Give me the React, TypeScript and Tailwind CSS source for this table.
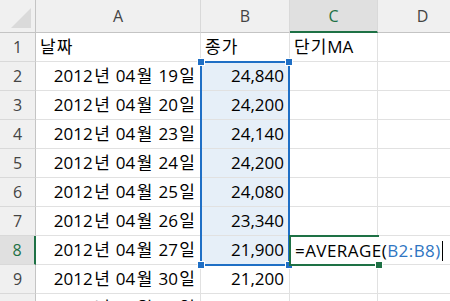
import React from 'react';

const FONT = "font-['Open_Sans','Noto_Sans_CJK_KR',sans-serif]";

const rows: { a: string; b: string }[] = [
  { a: '2012년 04월 19일', b: '24,840' },
  { a: '2012년 04월 20일', b: '24,200' },
  { a: '2012년 04월 23일', b: '24,140' },
  { a: '2012년 04월 24일', b: '24,200' },
  { a: '2012년 04월 25일', b: '24,080' },
  { a: '2012년 04월 26일', b: '23,340' },
  { a: '2012년 04월 27일', b: '21,900' },
  { a: '2012년 04월 30일', b: '21,200' },
  { a: '2012년 05월 01일', b: '21,150' },
];

// Hangul glyphs are a bit wider in the original font, pad them out
function Ko({ text, pad = 'px-[1.5px]' }: { text: string; pad?: string }) {
  return (
    <span>
      {Array.from(text).map((ch, i) =>
        /[\uac00-\ud7a3]/.test(ch) ? (
          <span key={i} className={pad}>
            {ch}
          </span>
        ) : (
          ch
        )
      )}
    </span>
  );
}

function ColHeader({ label, active }: { label: string; active?: boolean }) {
  return (
    <div
      className={`flex items-center justify-center border-r border-r-[#d9d9d9] text-[16px] ${
        active
          ? 'bg-[#e0e0e0] text-[#1e7145] border-b-2 border-b-[#1e7145]'
          : 'bg-[#f0f0f0] text-[#444] border-b border-b-[#c4c4c4]'
      }`}
    >
      {label}
    </div>
  );
}

function RowHeader({ n, active }: { n: number; active?: boolean }) {
  return (
    <div
      className={`flex items-center justify-center border-b border-b-[#d9d9d9] text-[16px] ${
        active
          ? 'bg-[#e0e0e0] text-[#1e7145] border-r-2 border-r-[#1e7145]'
          : 'bg-[#f0f0f0] text-[#444] border-r border-r-[#c4c4c4]'
      }`}
    >
      {n}
    </div>
  );
}

function Cell({
  children,
  align = 'right',
  tint,
  noRight,
  pr = 'pr-[5px]',
}: {
  children?: React.ReactNode;
  align?: 'left' | 'right';
  tint?: boolean;
  noRight?: boolean;
  pr?: string;
}) {
  return (
    <div
      className={`flex items-center whitespace-nowrap pl-[4px] ${pr} text-[17px] text-black border-b border-b-[#e1e1e1] ${
        noRight ? '' : 'border-r border-r-[#e1e1e1]'
      } ${align === 'right' ? 'justify-end' : 'justify-start'} ${tint ? 'bg-[#e6eff8]' : 'bg-white'}`}
    >
      {children}
    </div>
  );
}

export default function App() {
  return (
    <div className={`relative h-[301px] w-[450px] overflow-hidden bg-white ${FONT}`}>
      <div className="grid grid-cols-[36px_165px_89px_88px_90px] grid-rows-[33px_repeat(10,29px)]">
        {/* corner */}
        <div className="relative bg-[#f0f0f0] border-r border-r-[#c4c4c4] border-b border-b-[#c4c4c4]">
          <div className="absolute bottom-[4px] right-[4px] h-0 w-0 border-l-[20px] border-l-transparent border-b-[20px] border-b-[#dadada]" />
        </div>
        <ColHeader label="A" />
        <ColHeader label="B" />
        <ColHeader label="C" active />
        <ColHeader label="D" />

        {/* row 1 */}
        <RowHeader n={1} />
        <Cell align="left">
          <Ko text="날짜" pad="pr-[1px]" />
        </Cell>
        <Cell align="left">
          <Ko text="종가" pad="pr-[1px]" />
        </Cell>
        <Cell align="left">
          <Ko text="단기MA" pad="pr-[1px]" />
        </Cell>
        <Cell />

        {rows.map((r, i) => {
          const n = i + 2;
          const inRange = n >= 2 && n <= 8;
          const active = n === 8;
          return (
            <React.Fragment key={n}>
              <RowHeader n={n} active={active} />
              <Cell pr="pr-[3.5px]">
                <Ko text={r.a} />
              </Cell>
              <Cell tint={inRange}>{r.b}</Cell>
              {active ? (
                <div className="relative z-10 flex items-center whitespace-nowrap bg-white pl-[5px] text-[17px] tracking-[0.45px]">
                  <span className="shrink-0 text-black">=AVERAGE(</span>
                  <span className="shrink-0 text-[#2f75c2]">B2:B8)</span>
                  <span className="ml-[1px] block h-[20px] w-[1.5px] shrink-0 bg-black" />
                </div>
              ) : (
                <Cell />
              )}
              {active ? <Cell noRight /> : <Cell />}
            </React.Fragment>
          );
        })}
      </div>

      {/* reference range B2:B8 */}
      <div className="pointer-events-none absolute left-[200px] top-[61px] h-[205px] w-[90px] border-2 border-[#1f6fc5]">
        <span className="absolute -left-[4px] -top-[4px] h-[6px] w-[6px] bg-[#1f6fc5] outline outline-1 outline-white" />
        <span className="absolute -right-[4px] -top-[4px] h-[6px] w-[6px] bg-[#1f6fc5] outline outline-1 outline-white" />
        <span className="absolute -left-[4px] -bottom-[4px] h-[6px] w-[6px] bg-[#1f6fc5] outline outline-1 outline-white" />
        <span className="absolute -right-[4px] -bottom-[4px] h-[6px] w-[6px] bg-[#1f6fc5] outline outline-1 outline-white" />
      </div>

      {/* active cell C8 */}
      <div className="pointer-events-none absolute left-[289px] top-[235px] z-20 h-[31px] w-[90px] border-2 border-r-0 border-[#1e7145]">
        <span className="absolute -right-[3px] -bottom-[4px] h-[6px] w-[6px] bg-[#1e7145] outline outline-1 outline-white" />
      </div>
    </div>
  );
}
